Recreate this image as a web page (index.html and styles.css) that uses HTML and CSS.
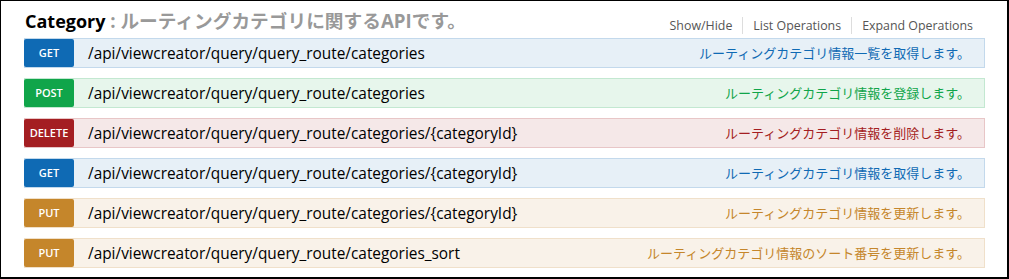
FILE: index.html
```html
<!DOCTYPE html>
<html lang="ja">
<head>
    <meta charset="UTF-8">
    <title>Category</title>
    <link rel="stylesheet" href="styles.css">
</head>
<body>
<div class="frame">
    <div class="resource">
        <div class="heading">
            <h2 class="title"><span class="name">Category</span> <span class="summary">: ルーティングカテゴリに関するAPIです。</span></h2>
            <ul class="options">
                <li><a href="javascript:;">Show/Hide</a></li>
                <li><a href="javascript:;">List Operations</a></li>
                <li><a href="javascript:;">Expand Operations</a></li>
            </ul>
        </div>
        <ul class="endpoints">
            <li class="op get">
                <span class="method">GET</span>
                <span class="path">/api/viewcreator/query/query_route/categories</span>
                <span class="desc">ルーティングカテゴリ情報一覧を取得します。</span>
            </li>
            <li class="op post">
                <span class="method">POST</span>
                <span class="path">/api/viewcreator/query/query_route/categories</span>
                <span class="desc">ルーティングカテゴリ情報を登録します。</span>
            </li>
            <li class="op delete">
                <span class="method">DELETE</span>
                <span class="path">/api/viewcreator/query/query_route/categories/{categoryId}</span>
                <span class="desc">ルーティングカテゴリ情報を削除します。</span>
            </li>
            <li class="op get">
                <span class="method">GET</span>
                <span class="path">/api/viewcreator/query/query_route/categories/{categoryId}</span>
                <span class="desc">ルーティングカテゴリ情報を取得します。</span>
            </li>
            <li class="op put">
                <span class="method">PUT</span>
                <span class="path">/api/viewcreator/query/query_route/categories/{categoryId}</span>
                <span class="desc">ルーティングカテゴリ情報を更新します。</span>
            </li>
            <li class="op put">
                <span class="method">PUT</span>
                <span class="path">/api/viewcreator/query/query_route/categories_sort</span>
                <span class="desc">ルーティングカテゴリ情報のソート番号を更新します。</span>
            </li>
        </ul>
    </div>
</div>
</body>
</html>
```

FILE: styles.css
```css
*{margin:0;padding:0;box-sizing:border-box}
ul{list-style:none}
a{text-decoration:none}
body{background:#fff;font-family:"Open Sans","Noto Sans CJK JP",sans-serif}

.frame{width:1009px;height:279px;border:1px solid #000;border-right-width:2px;border-bottom-width:2px;}
.resource{padding:0 22px 0 23px}

.heading{display:flex;justify-content:space-between;align-items:baseline;height:37px;padding-top:5px}
.title{font-size:18px;font-weight:700;color:#999;padding-left:1px}
.title .name{color:#000}
.title .summary{font-size:18.7px}
.options{display:flex;padding-right:12px;font-size:12.4px;position:relative;top:2px}
.options li{padding:0 10px;border-left:1px solid #ddd;line-height:17px}
.options li:first-child{border-left:none}
.options li:last-child{padding-right:0}
.options a{color:#555}

.endpoints{display:flex;flex-direction:column;gap:10px}
.op{display:flex;align-items:center;height:30px;border:1px solid}
.method{width:50px;height:28px;line-height:28px;text-align:center;color:#fff;font-size:11px;font-weight:600;border-radius:2px;margin-left:-1px;text-transform:uppercase}
.path{flex:1;padding-left:14px;font-size:15.4px;color:#000}
.desc{padding-right:14px;font-size:13px;line-height:26px}

.get{background:#e7f0f7;border-color:#c3d9ec}
.get .method{background:#0f6ab4}
.get .desc{color:#0f6ab4}
.post{background:#e7f6ec;border-color:#c3e8d1}
.post .method{background:#10a54a}
.post .desc{color:#10a54a}
.delete{background:#f5e8e8;border-color:#e8c6c7}
.delete .method{background:#a41e22}
.delete .desc{color:#a41e22}
.put{background:#f9f2e9;border-color:#f0e0ca}
.put .method{background:#c5862b}
.put .desc{color:#c5862b}
```
